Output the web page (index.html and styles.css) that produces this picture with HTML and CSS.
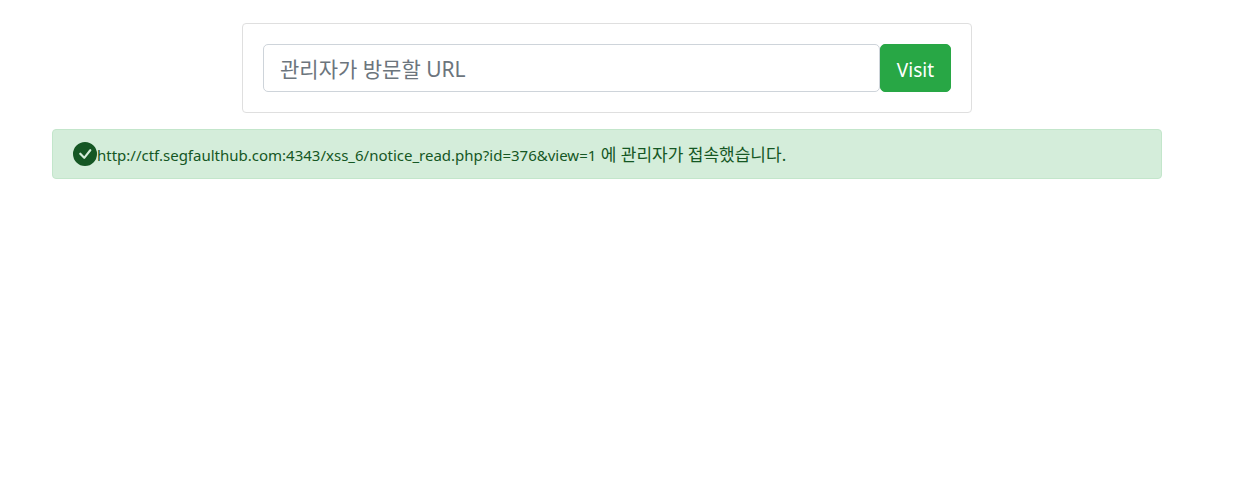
FILE: index.html
```html
<!DOCTYPE html>
<html lang="ko">
<head>
<meta charset="utf-8">
<title>Visit</title>
<link rel="stylesheet" href="styles.css">
</head>
<body>
<main class="container">
  <form class="card">
    <input class="url-input" type="text" aria-label="관리자가 방문할 URL" placeholder="관리자가 방문할 URL">
    <button class="visit-button" type="button">Visit</button>
  </form>
  <div class="alert" role="alert">
    <svg class="alert-icon" viewBox="0 0 16 16" aria-hidden="true"><path fill="currentColor" d="M16 8A8 8 0 1 1 0 8a8 8 0 0 1 16 0zm-3.97-3.03a.75.75 0 0 0-1.08.022L7.477 9.417 5.384 7.323a.75.75 0 0 0-1.06 1.06L6.97 11.03a.75.75 0 0 0 1.079-.02l3.992-4.99a.75.75 0 0 0-.01-1.05z"/></svg>
    <div class="alert-text"><span class="alert-url">http://ctf.segfaulthub.com:4343/xss_6/notice_read.php?id=376&amp;view=1</span> 에 관리자가 접속했습니다.</div>
  </div>
</main>
</body>
</html>
```
FILE: styles.css
```css
* {
  box-sizing: border-box;
}

body {
  margin: 0;
  background: #fff;
  font-family: "Noto Sans", "Noto Sans CJK KR", sans-serif;
}

.container {
  max-width: 1110px;
  margin: 0 79px 0 52px;
  padding-top: 23px;
}

.card {
  display: flex;
  max-width: 730px;
  margin: 0 auto 16px;
  padding: 20px;
  border: 1px solid #dfdfdf;
  border-radius: 4px;
}

.url-input {
  flex: 1;
  min-width: 0;
  height: 48px;
  padding: 9px 16px 7px;
  border: 1px solid #ced4da;
  border-radius: 5px;
  font: inherit;
  font-size: 21px;
}

.url-input::placeholder {
  color: #6c757d;
  opacity: 1;
}

.visit-button {
  height: 48px;
  padding: 10px 16px 6px;
  border: 1px solid #28a745;
  border-radius: 5px;
  background: #28a745;
  color: #fff;
  font: inherit;
  font-size: 19px;
}

.alert {
  display: flex;
  align-items: center;
  padding: 11px 20px;
  border: 1px solid #c3e6cb;
  border-radius: 4px;
  background: #d4edda;
  color: #155724;
  font-size: 17px;
  line-height: 24px;
}

.alert-text {
  padding-top: 2px;
}

.alert-url {
  font-size: 15px;
}

.alert-icon {
  flex: none;
  width: 24px;
  height: 24px;
}
```
